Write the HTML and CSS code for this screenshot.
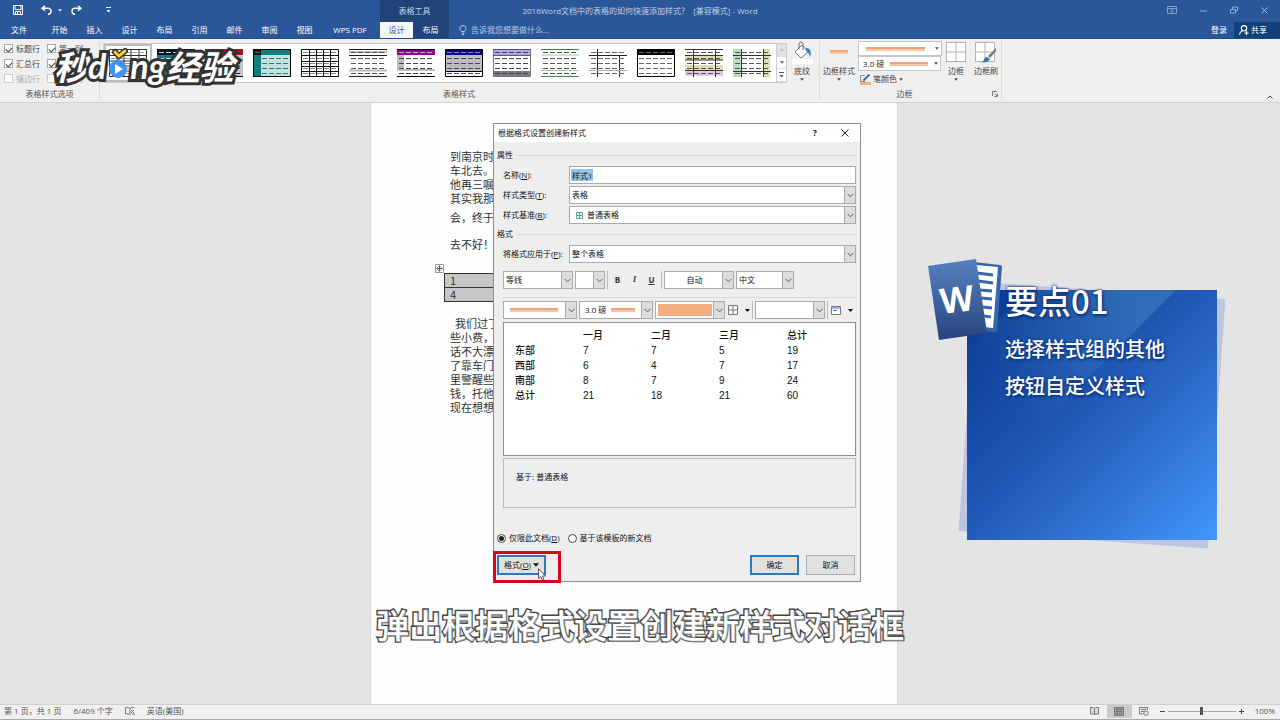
FILE: index.html
```html
<!DOCTYPE html>
<html lang="zh-CN">
<head>
<meta charset="utf-8">
<title>2016Word文档中的表格的如何快速添加样式？ - Word</title>
<link rel="stylesheet" href="styles.css">
</head>
<body>
<svg class="defs" aria-hidden="true">
  <defs>
    <g id="dash-row"><path d="M2 0h5M9 0h5M16 0h5M23 0h5M30 0h5"/></g>
    <g id="dashes" fill="none" stroke-width="1">
      <use href="#dash-row" y="3.5"/><use href="#dash-row" y="9.5"/><use href="#dash-row" y="14.5"/><use href="#dash-row" y="19.5"/><use href="#dash-row" y="24.5"/>
    </g>
    <symbol id="caret" viewBox="0 0 5 3"><path d="M0 0h5L2.500 3z" fill="currentColor"/></symbol>
    <symbol id="chevron" viewBox="0 0 7 5"><path d="M.5.8l3 3 3-3" fill="none" stroke="currentColor"/></symbol>
    <symbol id="grid" viewBox="0 0 20 20"><path d="M.5.5h19v19H.5zM10 1v18M1 10h18" fill="#fff" stroke="#b4b4b4"/></symbol>
  </defs>
</svg>

<header class="header">
  <div class="title-row">
    <div class="title-left">
      <div class="quick">
        <button class="icon-btn" aria-label="保存"><svg width="10" height="10" viewBox="0 0 10 10" fill="none" stroke="#fff"><path d="M.5.5h9v9h-9zM2 1v3.500h6V1M2.500 9V6.500h5V9M4.500 7v2"/></svg></button>
        <button class="icon-btn undo" aria-label="撤消"><svg width="11" height="10" viewBox="0 0 11 10" fill="none" stroke="#fff" stroke-width="1.400"><path d="M4 .8L1 3.300l3.200 2.500M1.200 3.300H7a3 3 0 010 6"/></svg></button>
        <button class="icon-btn" aria-label="撤消列表"><svg width="4" height="3" color="#dbe5f3"><use href="#caret"/></svg></button>
        <button class="icon-btn redo" aria-label="恢复"><svg width="11" height="10" viewBox="0 0 11 10" fill="none" stroke="#fff" stroke-width="1.400"><path d="M7 .8l3 2.500-3.200 2.500M9.800 3.300H4a3 3 0 000 6"/></svg></button>
        <button class="icon-btn more" aria-label="自定义快速访问工具栏"><svg width="5" height="6" viewBox="0 0 5 6"><path d="M0 .5h5" stroke="#fff"/><path d="M.5 3h4L2.500 5.500z" fill="#fff"/></svg></button>
      </div>
      <div class="context-title">表格工具</div>
    </div>
    <div class="doc-title">2016Word文档中的表格的如何快速添加样式？  [兼容模式] - Word</div>
    <div class="window-btns">
      <button class="icon-btn" aria-label="功能区显示选项"><svg width="10" height="8" viewBox="0 0 10 8" fill="none" stroke="#7f9fcf"><path d="M.5.5h9v7h-9zM1 2.500h8M5 7V4M3.500 5L5 3.800 6.500 5"/></svg></button>
      <button class="icon-btn" aria-label="最小化"><svg width="7" height="8" viewBox="0 0 7 8"><path d="M0 5h7" stroke="#8fabd6"/></svg></button>
      <button class="icon-btn" aria-label="还原"><svg width="8" height="8" viewBox="0 0 8 8" fill="none" stroke="#8fabd6"><path d="M.5 3.500h5v3.500h-5zM2.500 3V1h5v3.500H6"/></svg></button>
      <button class="icon-btn" aria-label="关闭"><svg width="7" height="7" viewBox="0 0 7 7"><path d="M.5.5l6 6M6.500.5l-6 6" stroke="#a9c0e2"/></svg></button>
    </div>
  </div>
  <div class="tab-row">
    <nav class="tabs">
      <button class="tab file">文件</button><button class="tab">开始</button><button class="tab">插入</button><button class="tab">设计</button><button class="tab">布局</button><button class="tab">引用</button><button class="tab">邮件</button><button class="tab">审阅</button><button class="tab">视图</button><button class="tab wps">WPS PDF</button>
    </nav>
    <nav class="context-tabs"><button class="tab active">设计</button><button class="tab">布局</button></nav>
    <button class="tell-me"><svg width="8" height="10" viewBox="0 0 8 10" fill="none" stroke="#b9cbe6"><path d="M2.500 6.500C.2 4.500.5.600 4 .600s3.800 3.900 1.500 5.900zM2.500 8h3M3 9.500h2"/></svg>告诉我您想要做什么...</button>
    <div class="account">
      <button class="sign-in">登录</button>
      <button class="share"><svg width="10" height="10" viewBox="0 0 10 10" fill="none" stroke="#fff" stroke-width="1.100"><circle cx="5" cy="3.300" r="2.700"/><path d="M.6 9.800C.8 7.500 2 6.200 3.600 6M7.500 6v4M5.500 8h4"/></svg>共享</button>
    </div>
  </div>
</header>

<section class="ribbon">
  <div class="group options">
    <div class="checks">
      <label><input type="checkbox" checked>标题行</label><label><input type="checkbox" checked>第一列</label>
      <label><input type="checkbox" checked>汇总行</label><label><input type="checkbox" checked>最后一列</label>
      <label class="off"><input type="checkbox">镶边行</label><label class="off"><input type="checkbox">镶边列</label>
    </div>
    <div class="group-label">表格样式选项</div>
  </div>

  <div class="group styles">
    <div class="group-main">
      <div class="gallery">
        <button class="thumb selected" aria-label="普通表格"><svg viewBox="0 0 38 28"><path d="M.5.5h37v27H.5zM8 0v28M15 0v28M22 0v28M30 0v28M0 6.500h38M0 12h38M0 17h38M0 22h38" fill="#fff" stroke="#333"/><use href="#dashes" stroke="#999"/></svg></button>
        <button class="thumb" aria-label="样式 2"><svg viewBox="0 0 38 28"><path d="M0 0h38v28H0z" fill="#0c7f86"/><path d="M0 0h38v6H0z" fill="#111"/><use href="#dashes" stroke="#bde"/></svg></button>
        <button class="thumb" aria-label="样式 3"><svg viewBox="0 0 38 28"><path d="M0 0h38v28H0z" fill="#c4c4c4"/><path d="M0 0h38v6H0z" fill="#a80d22"/><use href="#dashes" stroke="#333"/><path d="M0 27.500h38" stroke="#000"/></svg></button>
        <button class="thumb" aria-label="样式 4"><svg viewBox="0 0 38 28"><path d="M0 0h38v28H0z" fill="#c2e2de"/><path d="M0 0h38v6H0zM0 0h8v28H0z" fill="#087f80"/><path d="M0 0h8v6H0z" fill="#111"/><use href="#dashes" stroke="#377"/><path d="M.5.5h37v27H.5z" fill="none" stroke="#000"/></svg></button>
        <button class="thumb" aria-label="样式 5"><svg viewBox="0 0 38 28"><path d="M.5.5h37v27H.5zM8.500 0v28M15.500 0v28M22.500 0v28M29.500 0v28M0 6.500h38M0 12.500h38M0 17.500h38M0 22.500h38" fill="#fff" stroke="#111"/><use href="#dashes" stroke="#888"/></svg></button>
        <button class="thumb" aria-label="样式 6"><svg viewBox="0 0 38 28"><path d="M0 0h38v28H0z" fill="#fff"/><path d="M0 .5h38M0 6.500h38M0 27.500h38" stroke="#222"/><path d="M0 21.500h38M0 3h38" stroke="#bbb" stroke-width="2"/><use href="#dashes" stroke="#555"/></svg></button>
        <button class="thumb" aria-label="样式 7"><svg viewBox="0 0 38 28"><path d="M0 0h38v28H0z" fill="#fff"/><path d="M0 6h7v16H0zM0 20h38v2H0z" fill="#bdbdbd"/><path d="M0 0h38v6H0z" fill="#8a068a"/><use href="#dashes" stroke="#444"/><path d="M2 3.500h5M9 3.500h5M16 3.500h5M23 3.500h5M30 3.500h5" stroke="#d8a0d8"/><path d="M0 .5h38M0 27.500h38" stroke="#000"/></svg></button>
        <button class="thumb" aria-label="样式 8"><svg viewBox="0 0 38 28"><path d="M0 0h38v28H0z" fill="#fff"/><path d="M0 6h38v16H0z" fill="#bdbdbd"/><path d="M0 0h38v6H0z" fill="#080880"/><use href="#dashes" stroke="#448"/><path d="M2 3.500h5M9 3.500h5M16 3.500h5M23 3.500h5M30 3.500h5" stroke="#88c"/><path d="M.5.5h37v27H.5zM0 22.500h38" fill="none" stroke="#000"/></svg></button>
        <button class="thumb" aria-label="样式 9"><svg viewBox="0 0 38 28"><path d="M.5.5h37v27H.5z" fill="#fff" stroke="#777"/><path d="M1 1h36v5H1z" fill="#aaa8e8"/><path d="M1 22h36v5H1z" fill="#777b88"/><path d="M0 .5h38M0 6.500h38" stroke="#558"/><use href="#dashes" stroke="#444"/></svg></button>
        <button class="thumb" aria-label="样式 10"><svg viewBox="0 0 38 28"><path d="M0 0h38v28H0z" fill="#fff"/><path d="M0 .5h38M0 27.500h38" stroke="#3c8a43"/><path d="M0 6h38M0 21.500h38" stroke="#9bcf9e"/><use href="#dashes" stroke="#555"/></svg></button>
        <button class="thumb" aria-label="样式 11"><svg viewBox="0 0 38 28"><path d="M0 0h38v28H0z" fill="#fff"/><path d="M0 6.500h38M8.500 0v28M30.500 6v22" stroke="#222"/><path d="M0 21.500h38" stroke="#aaa"/><use href="#dashes" stroke="#666"/></svg></button>
        <button class="thumb" aria-label="样式 12"><svg viewBox="0 0 38 28"><path d="M.5.5h37v27H.5z" fill="#fff" stroke="#000"/><path d="M0 0h38v6H0z"/><use href="#dashes" stroke="#666"/></svg></button>
        <button class="thumb" aria-label="样式 13"><svg viewBox="0 0 38 28"><path d="M0 0h38v28H0z" fill="#fff"/><path d="M0 6h38v5H0zM0 16h38v5H0z" fill="#deddb0"/><path d="M0 22h38v5H0z" fill="#e3c7e5"/><use href="#dashes" stroke="#555"/><path d="M0 .5h38M0 6.500h38M0 11h38M0 21.500h38M8.500 0v28M30.500 0v28" stroke="#333"/></svg></button>
        <button class="thumb" aria-label="样式 14"><svg viewBox="0 0 38 28"><path d="M0 0h38v28H0z" fill="#fff"/><path d="M0 0h8v28H0z" fill="#b9dfbd"/><path d="M31 0h6v28h-6z" fill="#deddb0"/><use href="#dashes" stroke="#555"/><path d="M0 6.500h38M0 22.500h38M8.500 0v28M30.500 0v28" stroke="#333"/></svg></button>
        <div class="gallery-scroll">
          <button aria-label="上一行" disabled><svg width="4" height="3" viewBox="0 0 5 3"><path d="M0 3h5L2.500 0z" fill="#bbb"/></svg></button>
          <button aria-label="下一行"><svg width="4" height="3"><use href="#caret"/></svg></button>
          <button aria-label="其他"><svg width="5" height="6" viewBox="0 0 5 6"><path d="M0 .5h5" stroke="#555"/><path d="M.5 3h4L2.500 5.500z" fill="#555"/></svg></button>
        </div>
      </div>
      <button class="big-btn shading"><svg width="21" height="23" viewBox="0 0 21 23"><path d="M3 11l7-7 6 7-7 6z" fill="#fff" stroke="#777"/><path d="M7 8V3a2 2 0 014 0v6" fill="none" stroke="#777"/><path d="M14 7c4 0 6 3 4 9-1-4-2-5-4-6z" fill="#3f7dbd"/><path d="M0 18h21v5H0z" fill="#fff"/></svg>底纹<svg class="drop"><use href="#caret"/></svg></button>
    </div>
    <div class="group-label styles-label">表格样式</div>
  </div>

  <div class="group borders">
    <div class="group-main">
      <button class="big-btn border-style"><svg width="18" height="23" viewBox="0 0 18 23"><path d="M0 9h18v4H0z" fill="#f8c7a8"/><path d="M0 9h18v2H0z" fill="#eda77b"/></svg>边框样式<svg class="drop"><use href="#caret"/></svg></button>
      <div class="pen">
        <div class="pen-combo wide"><select class="line-long" aria-label="笔样式"><option></option></select><svg class="drop"><use href="#caret"/></svg></div>
        <div class="pen-combo"><select class="line-short" aria-label="笔划粗细"><option>3.0 磅</option></select><svg class="drop"><use href="#caret"/></svg></div>
        <button class="pen-color"><svg width="11" height="11" viewBox="0 0 11 11"><path d="M5 1.500H.5v6H5" fill="none" stroke="#888"/><path d="M3.500 6.500L9.500.5" stroke="#2f6fb0" stroke-width="2"/><path d="M0 8h11v3H0z" fill="#f2ad80"/></svg>笔颜色<svg class="drop"><use href="#caret"/></svg></button>
      </div>
      <button class="big-btn border-btn"><svg width="20" height="23" viewBox="0 0 20 23"><use href="#grid" width="20" height="20" y="1"/><path d="M0 20.500h20" stroke="#aaa"/></svg>边框<svg class="drop"><use href="#caret"/></svg></button>
      <button class="big-btn brush"><svg width="22" height="23" viewBox="0 0 22 23"><use href="#grid" width="20" height="20" y="1"/><path d="M21 7l-8 8 2 2 6-7z" fill="#777"/><path d="M6 21c4 0 2-5 6-5l3 2c-1 3-5 4-9 3z" fill="#3b7ab8"/></svg>边框刷</button>
    </div>
    <div class="group-foot"><span class="group-label">边框</span><button class="icon-btn launcher" aria-label="边框设置"><svg width="6" height="6" viewBox="0 0 6 6" fill="none" stroke="#777"><path d="M.5 5V.5H5M2.500 2.500L5 5M5.500 2.500v3h-3"/></svg></button></div>
  </div>
  <button class="icon-btn collapse" aria-label="折叠功能区"><svg width="6" height="4" viewBox="0 0 6 4" fill="none" stroke="#444"><path d="M.5 3.500L3 1l2.500 2.500"/></svg></button>

  <div class="watermark">
    <span class="wm-cjk">秒</span><span class="wm-latin">d</span>
    <svg class="wm-play" width="20" height="36" viewBox="0 0 20 36"><circle cx="10" cy="25" r="9" fill="#4193ee"/><path d="M7 20l8 5-8 5z" fill="#fff"/><path d="M7 8l4 4 6-5" fill="none" stroke="#333" stroke-width="6" stroke-linecap="round"/><path d="M7 8l4 4 6-5" fill="none" stroke="#f6cf2b" stroke-width="3" stroke-linecap="round"/></svg>
    <span class="wm-latin">ng</span><span class="wm-cjk">经验</span>
  </div>
</section>

<main class="workspace">
  <article class="page">
    <p class="lines">到南京时<br>车北去。<br>他再三嘱<br>其实我那</p>
    <p class="lines single">会，终于</p>
    <p class="lines answer">去不好！</p>
    <div class="table-wrap">
      <svg class="table-handle" width="9" height="9" viewBox="0 0 9 9" fill="none" stroke="#555"><path d="M.5.5h8v8h-8z" fill="#fff" stroke="#999"/><path d="M4.500 1.500v6M1.500 4.500h6M3.500 2.500h2M3.500 6.500h2M2.500 3.500v2M6.500 3.500v2"/></svg>
      <table class="doc-table"><tbody><tr><td>1</td></tr><tr><td>4</td></tr></tbody></table>
    </div>
    <p class="lines second"><span class="indent">我们过了</span><br>些小费，<br>话不大漂<br>了靠车门<br>里警醒些<br>钱，托他<br>现在想想</p>

    <form class="dialog" role="dialog" aria-labelledby="dlg-title">
      <div class="dialog-title"><h1 id="dlg-title">根据格式设置创建新样式</h1><button type="button" class="help" aria-label="帮助">?</button><button type="button" class="close" aria-label="关闭"><svg width="8" height="8" viewBox="0 0 8 8"><path d="M.5.5l7 7M7.500.5l-7 7" stroke="#222"/></svg></button></div>
      <div class="dialog-body">
        <h2>属性</h2>
        <div class="fields">
          <label for="name">名称(<u>N</u>):</label>
          <input id="name" class="name" type="text" value="样式1">
          <label for="type">样式类型(<u>T</u>):</label>
          <div class="combo"><select id="type"><option>表格</option></select><span class="arrow"><svg width="7" height="5"><use href="#chevron"/></svg></span></div>
          <label for="base">样式基准(<u>B</u>):</label>
          <div class="combo"><svg class="base-icon" width="7" height="7" viewBox="0 0 7 7"><path d="M.5.5h6v6h-6zM3.500 1v5M1 3.500h5" fill="#e5f3ef" stroke="#6a9b90"/></svg><select id="base"><option>普通表格</option></select><span class="arrow"><svg width="7" height="5"><use href="#chevron"/></svg></span></div>
        </div>
        <h2>格式</h2>
        <div class="fields apply">
          <label for="apply">将格式应用于(<u>P</u>):</label>
          <div class="combo"><select id="apply"><option>整个表格</option></select><span class="arrow"><svg width="7" height="5"><use href="#chevron"/></svg></span></div>
        </div>
        <div class="tools">
          <div class="combo w70"><select aria-label="字体"><option>等线</option></select><span class="arrow"><svg width="7" height="5"><use href="#chevron"/></svg></span></div>
          <div class="combo w30"><select aria-label="字号"><option></option></select><span class="arrow"><svg width="7" height="5"><use href="#chevron"/></svg></span></div>
          <i class="sep"></i>
          <button type="button" class="fmt bold">B</button><button type="button" class="fmt italic">I</button><button type="button" class="fmt under">U</button>
          <i class="sep"></i>
          <div class="combo w70 centered"><select aria-label="字体颜色"><option>自动</option></select><span class="arrow"><svg width="7" height="5"><use href="#chevron"/></svg></span></div>
          <div class="combo w58"><select aria-label="语言"><option>中文</option></select><span class="arrow"><svg width="7" height="5"><use href="#chevron"/></svg></span></div>
        </div>
        <div class="tools second-tools">
          <div class="combo w74"><select class="line-dialog" aria-label="线型"><option></option></select><span class="arrow"><svg width="7" height="5"><use href="#chevron"/></svg></span></div>
          <div class="combo w74"><select class="line-weight" aria-label="线宽"><option>3.0 磅</option></select><span class="arrow"><svg width="7" height="5"><use href="#chevron"/></svg></span></div>
          <div class="combo w70"><select class="swatch" aria-label="边框颜色"><option></option></select><span class="arrow"><svg width="7" height="5"><use href="#chevron"/></svg></span></div>
          <button type="button" class="split" aria-label="边框"><svg width="10" height="10" viewBox="0 0 10 10"><path d="M.5.5h9v9h-9zM5 1v8M1 5h8" fill="#fff" stroke="#777"/></svg><svg width="5" height="3"><use href="#caret"/></svg></button>
          <i class="sep"></i>
          <div class="combo w70"><select aria-label="填充颜色"><option></option></select><span class="arrow"><svg width="7" height="5"><use href="#chevron"/></svg></span></div>
          <i class="sep"></i>
          <button type="button" class="split" aria-label="对齐方式"><svg width="10" height="9" viewBox="0 0 10 9"><path d="M.5.5h9v8h-9z" fill="#fff" stroke="#778"/><path d="M1 1h8v2H1z" fill="#9bb8d8"/><path d="M2 4.500h4" stroke="#3676b8"/></svg><svg width="5" height="3"><use href="#caret"/></svg></button>
        </div>
        <div class="preview">
          <table>
            <thead><tr><th></th><th>一月</th><th>二月</th><th>三月</th><th>总计</th></tr></thead>
            <tbody>
              <tr><th>东部</th><td>7</td><td>7</td><td>5</td><td>19</td></tr>
              <tr><th>西部</th><td>6</td><td>4</td><td>7</td><td>17</td></tr>
              <tr><th>南部</th><td>8</td><td>7</td><td>9</td><td>24</td></tr>
              <tr><th>总计</th><td>21</td><td>18</td><td>21</td><td>60</td></tr>
            </tbody>
          </table>
        </div>
        <div class="description">基于: 普通表格</div>
        <div class="radios">
          <label><input type="radio" name="scope" checked><span>仅限此文档(<u>D</u>)</span></label>
          <label><input type="radio" name="scope"><span>基于该模板的新文档</span></label>
        </div>
        <div class="actions">
          <button type="button" class="btn focus"><span>格式(<u>O</u>)</span><svg width="6" height="4"><use href="#caret"/></svg></button>
          <button type="submit" class="btn focus ok">确定</button>
          <button type="button" class="btn">取消</button>
        </div>
      </div>
      <div class="highlight"></div>
      <svg class="cursor" width="8" height="13" viewBox="0 0 8 13"><path d="M.5.700v9.800l2.200-2 1.500 3.700 1.700-.7-1.500-3.500h3z" fill="#fff" stroke="#333" stroke-width=".8"/></svg>
    </form>
    <div class="caption">弹出根据格式设置创建新样式对话框</div>
  </article>

  <aside class="note">
    <div class="note-card">
      <h2>要点01</h2>
      <p>选择样式组的其他<br>按钮自定义样式</p>
    </div>
    <svg class="word-logo" width="78" height="84" viewBox="0 0 78 84">
      <defs>
        <linearGradient id="cover" x1="0" y1="0" x2="0" y2="1"><stop offset="0" stop-color="#5681c0"/><stop offset="1" stop-color="#27457e"/></linearGradient>
      </defs>
      <path d="M48 5l26 3q2 0 2 2l-5 63q0 2-2 2l-14-1z" fill="#3a67a8"/>
      <path d="M50 8l22 2-5 61-9-1z" fill="#fff"/>
      <path d="M51 16l16 2M52 24l15 2M54 33l12 1M55 41l11 1M57 50l9 1M58 59l7 1" stroke="#3a67a8" stroke-width="3"/>
      <path d="M2 9l48-7 11 74-48 7z" fill="url(#cover)"/>
      <text class="word-letter" x="31" y="55" text-anchor="middle" transform="rotate(-7 31 45)">W</text>
    </svg>
  </aside>
</main>

<footer class="status">
  <span>第 1 页，共 1 页</span><span>6/409 个字</span>
  <svg width="10" height="8" viewBox="0 0 10 8" fill="none" stroke="#777"><path d="M5 1.500C4 .5 2 .5.5.700v6.300C2 6.700 4 6.700 5 7.500V1.500C6 .5 8 .5 9.500.700M6 3l3 3M9 3L6 6M7 7.200h3"/></svg>
  <span>英语(美国)</span>
  <div class="status-right">
    <button class="view" aria-label="阅读视图"><svg width="9" height="8" viewBox="0 0 9 8" fill="#ddd" stroke="#777"><path d="M.5.5h3l1 1 1-1h3v6.500h-3l-1 .5-1-.5h-3zM4.500 1.500v6"/></svg></button>
    <button class="view current" aria-label="页面视图"><svg width="10" height="9" viewBox="0 0 10 9" fill="#999" stroke="#777"><path d="M.5.5h9v8h-9zM2 2.500h6M2 4.500h6M2 6.500h6"/></svg></button>
    <button class="view" aria-label="Web 版式视图"><svg width="10" height="9" viewBox="0 0 10 9" fill="none" stroke="#777"><path d="M8.500 3V.5h-8v6.500H4M2 2.500h5M2 4.500h3"/><circle cx="7" cy="6.200" r="2.200"/></svg></button>
    <button class="zoom-btn" aria-label="缩小"><svg width="5" height="5" viewBox="0 0 5 5"><path d="M0 2.500h5" stroke="#444"/></svg></button>
    <input class="zoom" type="range" min="10" max="190" value="100" aria-label="缩放">
    <button class="zoom-btn" aria-label="放大"><svg width="5" height="5" viewBox="0 0 5 5"><path d="M0 2.500h5M2.500 0v5" stroke="#444"/></svg></button>
    <span class="percent">100%</span>
  </div>
</footer>
</body>
</html>
```

FILE: styles.css
```css
* { box-sizing: border-box; }
body {
  margin: 0;
  min-height: 100vh;
  display: flex;
  flex-direction: column;
  font-family: "Open Sans", "Noto Sans CJK SC", sans-serif;
  font-size: 8px;
  line-height: 10px;
  color: #333;
  background: #e4e4e4;
}
button, input, select { font: inherit; color: inherit; margin: 0; padding: 0; }
button { border: 0; background: none; white-space: nowrap; }
svg { display: block; flex: none; }
h1, h2, p { margin: 0; font-weight: 400; font-size: inherit; }
select { appearance: none; border: 0; background-color: transparent; border-radius: 0; outline: 0; }
.defs { position: absolute; width: 0; height: 0; }
.icon-btn { display: flex; align-items: center; justify-content: center; }
.drop { width: 4px; height: 3px; color: #555; }

/* title bar and tabs */
.header { background: #2a579a; color: #fff; border-bottom: 1px solid #1f4e8f; }
.title-row { display: grid; grid-template-columns: 1fr auto 1fr; height: 22px; align-items: stretch; }
.title-left { display: flex; }
.quick { width: 380px; display: flex; align-items: center; padding: 0 0 2px 13px; }
.undo { margin-left: 18px; margin-right: 6px; }
.redo { margin-left: 9px; }
.more { margin-left: 24px; }
.context-title { width: 69px; background: #204479; color: #c5d3e8; display: flex; align-items: center; justify-content: center; }
.doc-title { display: flex; align-items: center; color: #c3d1e7; white-space: pre; }
.window-btns { display: flex; justify-content: flex-end; align-items: center; gap: 23px; padding: 0 12px 2px 0; }
.tab-row { display: flex; height: 16px; }
.tabs { display: flex; width: 380px; }
.tab { width: 35px; text-align: center; }
.file { width: 38px; margin-right: 4px; }
.wps { width: 56px; }
.context-tabs { display: flex; width: 69px; background: #204479; }
.active { width: 33px; background: #f4f6fa; color: #2a579a; }
.tell-me { display: flex; align-items: center; gap: 4px; margin-left: 10px; color: #b9cbe6; }
.account { display: flex; margin-left: auto; gap: 7px; }
.share { display: flex; align-items: center; gap: 2px; width: 46px; padding-left: 5px; background: #11407b; }

/* ribbon */
.ribbon { position: relative; display: flex; height: 64px; padding-top: 2px; background: #efefef; border-bottom: 1px solid #d2d2d2; color: #444; }
.group { display: flex; flex-direction: column; justify-content: space-between; border-right: 1px solid #d9d9d9; margin-bottom: 3px; }
.group-main { display: flex; }
.group-label { text-align: center; color: #555; }
.options { width: 100px; }
.checks { display: grid; grid-template-columns: 43px 1fr; grid-auto-rows: 15px; padding-left: 4px; }
.checks label { display: flex; align-items: center; gap: 3px; white-space: nowrap; }
.checks input { appearance: none; width: 9px; height: 9px; border: 1px solid #aaa; background: #fff; display: grid; place-items: center; }
.checks input:checked::after { content: ""; width: 5px; height: 3px; border-left: 1px solid #444; border-bottom: 1px solid #444; transform: rotate(-45deg); }
.off { color: #aaa; }
.off input { border-color: #ccc; }
.styles { width: 720px; padding-left: 3px; }
.gallery { display: flex; height: 40px; margin-top: 2px; background: #fff; border: 1px solid #ccc; }
.thumb { width: 48px; display: flex; align-items: center; justify-content: center; }
.thumb svg { width: 38px; height: 28px; }
.selected { box-shadow: inset 0 0 0 2px #bdbdbd; }
.gallery-scroll { display: grid; grid-template-rows: repeat(3, 1fr); width: 10px; border-left: 1px solid #ccc; color: #555; }
.gallery-scroll button { display: grid; place-items: center; border-bottom: 1px solid #ddd; }
.gallery-scroll button:disabled { background: #e2e2e2; }
.big-btn { display: flex; flex-direction: column; align-items: center; height: 42px; gap: 2px; }
.shading { width: 30px; }
.styles-label { width: 712px; }
.borders { width: 182px; }
.border-style { width: 38px; }
.pen { width: 88px; }
.pen-combo { display: flex; align-items: center; width: 83px; height: 15px; border: 1px solid #c6c6c6; background: #fff; padding-right: 2px; }
.pen-combo.wide { width: 84px; }
.pen-combo select { flex: 1; height: 13px; color: #222; background-repeat: no-repeat; }
.line-long { background-image: linear-gradient(#eda77b 50%, #f8c7a8 50%); background-size: 59px 4px; background-position: 7px 5px; }
.line-short { padding-left: 4px; background-image: linear-gradient(#eda77b 50%, #f8c7a8 50%); background-size: 38px 4px; background-position: 31px 5px; }
.pen-color { display: flex; align-items: center; gap: 2px; height: 16px; padding-left: 2px; }
.border-btn { width: 20px; }
.brush { width: 28px; margin-left: 5px; padding-left: 2px; }
.group-foot { display: flex; align-items: center; }
.group-foot .group-label { flex: 1; }
.launcher { width: 12px; }
.collapse { margin-left: auto; align-self: flex-end; padding: 0 7px 3px; }

.watermark { position: absolute; left: 54px; top: 5px; display: flex; height: 44px; color: #fff; font-style: italic; font-weight: 700; line-height: 44px; }
.watermark span { -webkit-text-stroke: 6px #333; paint-order: stroke fill; }
.wm-cjk { font-family: "Noto Sans CJK SC", sans-serif; font-size: 34px; }
.wm-latin { font-family: Lato, sans-serif; font-size: 34px; }
.watermark .wm-play + .wm-latin { margin-left: 2px; }
.wm-play { position: relative; z-index: 1; margin-left: 2px; }

/* document */
.workspace { position: relative; flex: 1; display: flex; justify-content: center; padding-right: 12px; }
.page { position: relative; width: 528px; padding: 46px 79px; background: #fdfdfd; border: 1px solid #d8d8d8; border-width: 0 1px; color: #333; font-family: "Noto Sans CJK SC", sans-serif; font-size: 11px; line-height: 14px; }
.lines { white-space: nowrap; }
.single { margin-top: 5px; }
.answer { margin-top: 13px; }
.second { margin-top: 14px; }
.indent { padding-left: 5px; }
.table-wrap { position: relative; margin: 22px 0 0 -6px; }
.table-handle { position: absolute; left: -9px; top: -9px; }
.doc-table { width: 100%; border-collapse: collapse; background: #c6c6c6; }
.doc-table td { height: 14px; padding: 0 5px; line-height: 13px; border: 1px solid #333; }

/* dialog */
.dialog { position: absolute; left: 122px; top: 20px; width: 368px; border: 1px solid #8e8e8e; background: #eee; font-family: "Open Sans", "Noto Sans CJK SC", sans-serif; font-size: 8px; line-height: 10px; color: #111; }
.dialog-title { display: flex; align-items: center; height: 18px; padding: 0 11px 0 4px; background: #fff; }
.dialog-title h1 { flex: 1; }
.help { width: 12px; margin-right: 20px; font-weight: 700; }
.dialog-body { padding: 7px 4px 6px 3px; }
.dialog-body h2 { display: flex; align-items: center; gap: 4px; height: 12px; }
.dialog-body h2::after { content: ""; flex: 1; height: 1px; background: #d9d9d9; }
.fields { display: grid; grid-template-columns: 66px 1fr; row-gap: 2px; align-items: center; padding: 5px 0 4px 6px; }
.name { height: 18px; min-width: 0; border: 1px solid #aaa; padding: 0 2px; background: linear-gradient(#96c2e8, #96c2e8) 1px 2px / 22px 12px no-repeat #fff; outline: 0; }
.combo { display: flex; align-items: center; height: 18px; border: 1px solid #aaa; background: #fff; }
.combo select { flex: 1; min-width: 0; height: 16px; padding-left: 2px; background-repeat: no-repeat; }
.arrow { display: grid; place-items: center; align-self: stretch; width: 11px; background: #ddd; border-left: 1px solid #aaa; color: #555; }
.base-icon { margin: 0 4px 0 6px; }
.base-icon + select { padding-left: 0; }
.apply { padding: 5px 0 8px 6px; }
.tools { display: flex; align-items: center; gap: 2px; margin-left: 6px; height: 18px; }
.w70 { width: 70px; }
.w30 { width: 30px; }
.w58 { width: 58px; }
.w74 { width: 74px; }
.centered select { text-align: center; text-align-last: center; }
.sep { width: 1px; align-self: stretch; background: #bbb; }
.fmt { width: 15px; color: #333; }
.bold { font-weight: 700; }
.italic { font-family: "Liberation Serif", serif; font-style: italic; font-weight: 700; }
.under { font-weight: 700; text-decoration: underline; }
.second-tools { height: 22px; margin-top: 8px; padding-top: 3px; border-top: 1px solid #d9d9d9; }
.line-dialog { background-image: linear-gradient(#eda77b 50%, #f8c7a8 50%); background-size: 48px 4px; background-position: 6px 6px; }
.line-weight { background-image: linear-gradient(#eda77b 50%, #f8c7a8 50%); background-size: 24px 4px; background-position: 31px 6px; }
.combo .line-weight { padding-left: 5px; }
.swatch { background-image: linear-gradient(#f2ad80, #f2ad80); background-size: 54px 12px; background-position: 2px 2px; }
.split { display: flex; align-items: center; justify-content: center; gap: 7px; width: 23px; }
.preview { height: 134px; margin: 3px 0 0 6px; padding: 5px 0 0 11px; border: 1px solid #8e8e8e; background: #fff; }
.preview table { table-layout: fixed; width: 340px; border-collapse: collapse; font-family: "Liberation Sans", "Noto Sans CJK SC", sans-serif; font-size: 10px; line-height: 15px; }
.preview th, .preview td { padding: 0; text-align: left; font-weight: 400; height: 15px; }
.preview th { font-weight: 500; }
.description { height: 50px; margin: 2px 0 0 6px; padding: 13px 12px; border: 1px solid #bbb; }
.radios { display: flex; gap: 8px; margin-top: 24px; height: 12px; }
.radios label { display: flex; align-items: center; white-space: nowrap; }
.radios input { appearance: none; width: 9px; height: 9px; margin-right: 3px; border: 1px solid #444; border-radius: 50%; background: #fff; display: grid; place-items: center; }
.radios input:checked::after { content: ""; width: 5px; height: 5px; border-radius: 50%; background: #222; }
.actions { display: flex; gap: 7px; margin-top: 11px; padding-right: 1px; }
.btn { display: flex; align-items: center; justify-content: center; gap: 2px; width: 49px; height: 20px; border: 1px solid #adadad; background: #e1e1e1; }
.focus { border: 2px solid #2b79be; }
.ok { margin-left: auto; }
.highlight { position: absolute; left: -1px; bottom: -2px; width: 68px; height: 32px; border: 3px solid #d5081d; pointer-events: none; }
.cursor { position: absolute; left: 44px; bottom: 0; }

.caption { position: absolute; left: 5px; top: 497px; white-space: nowrap; color: #fff; font-size: 33px; line-height: 48px; font-weight: 500; -webkit-text-stroke: 3px #444; paint-order: stroke fill; text-shadow: 1px 1px 2px #aaa; }

/* side note */
.note { position: absolute; right: 63px; top: 187px; width: 250px; color: #fff; font-family: "Noto Sans CJK SC", sans-serif; }
.note::before { content: ""; position: absolute; inset: 0; background: #bdc5e3; transform: rotate(4deg); }
.note-card { position: relative; height: 250px; padding: 0 0 0 38px; background: linear-gradient(135deg, #0a3790 0%, #1f58b5 45%, #2b69c8 62%, #4297fb 100%); }
.note-card::before { content: ""; position: absolute; inset: 0; background: linear-gradient(225deg, rgba(80, 160, 200, .35) 20%, rgba(80, 160, 200, 0) 62%); clip-path: polygon(62px 0, 209px 0, 0 209px, 0 62px); }
.note-card h2 { position: relative; top: -14px; font-size: 33px; line-height: 48px; font-weight: 500; white-space: nowrap; text-shadow: 0 0 2px #0d347c, 0 0 3px #0d347c, 1px 2px 3px #0d347c; }
.note-card p { position: relative; margin-top: -8px; font-size: 20px; line-height: 37px; font-weight: 500; white-space: nowrap; text-shadow: 0 0 3px #0d347c, 1px 2px 3px #0d347c; }
.word-logo { position: absolute; left: -41px; top: -33px; }
.word-letter { font-family: "Open Sans", sans-serif; font-weight: 700; font-size: 35px; fill: #fff; }

/* status bar */
.status { display: flex; align-items: center; gap: 12px; height: 16px; padding: 0 5px 2px 4px; background: #f0f0f0; border-top: 1px solid #d0d0d0; border-bottom: 1px solid #aaa; color: #555; white-space: nowrap; }
.status-right { display: flex; align-items: center; margin-left: auto; }
.view { display: grid; place-items: center; width: 25px; height: 13px; }
.current { background: #cacaca; }
.zoom-btn { padding: 4px 3px; }
.zoom { appearance: none; width: 68px; height: 9px; background: linear-gradient(#aaa, #aaa) center / 100% 1px no-repeat; }
.zoom::-webkit-slider-thumb { appearance: none; width: 3px; height: 8px; background: #555; }
.percent { margin-left: 8px; }
```
